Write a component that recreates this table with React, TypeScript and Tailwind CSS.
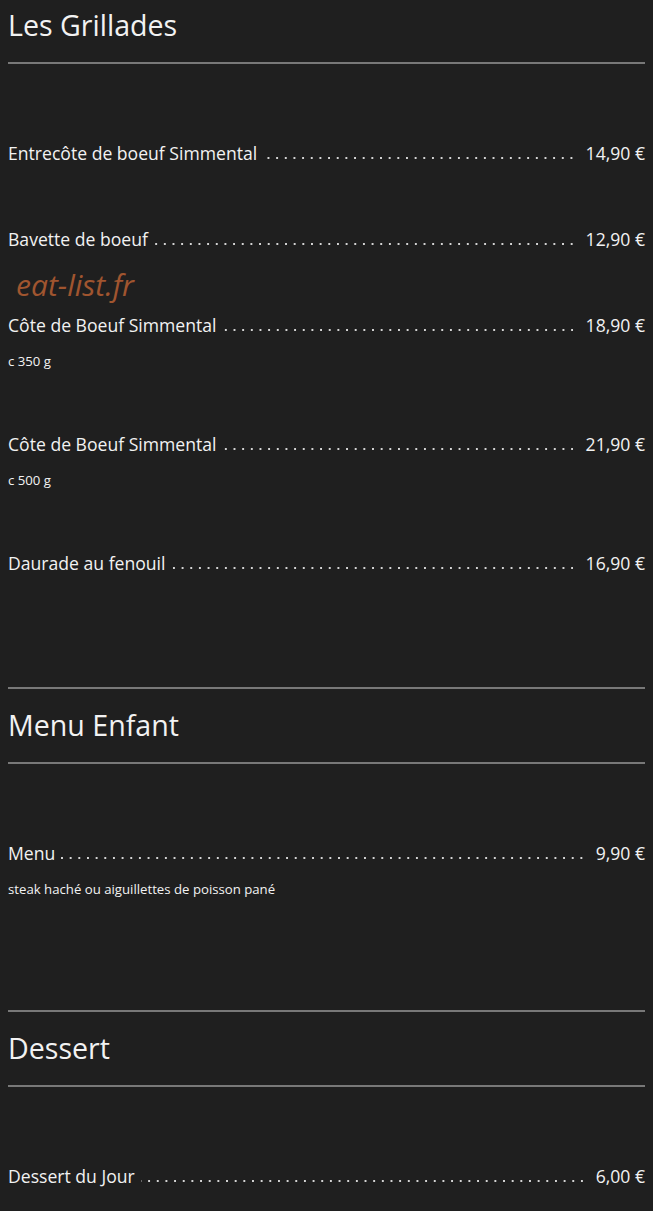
import React from "react";

type Item = { name: string; price: string; desc?: string };
type Section = { title: string; items: Item[] };

const sections: Section[] = [
  {
    title: "Les Grillades",
    items: [
      { name: "Entrecôte de boeuf Simmental", price: "14,90 €" },
      { name: "Bavette de boeuf", price: "12,90 €" },
      { name: "Côte de Boeuf Simmental", price: "18,90 €", desc: "c 350 g" },
      { name: "Côte de Boeuf Simmental", price: "21,90 €", desc: "c 500 g" },
      { name: "Daurade au fenouil", price: "16,90 €" },
    ],
  },
  {
    title: "Menu Enfant",
    items: [
      {
        name: "Menu",
        price: "9,90 €",
        desc: "steak haché ou aiguillettes de poisson pané",
      },
    ],
  },
  {
    title: "Dessert",
    items: [{ name: "Dessert du Jour", price: "6,00 €" }],
  },
];

function Row({ item }: { item: Item }) {
  return (
    <div className="pb-[62px]">
      <div className="flex items-end text-[17.6px] leading-[24px] text-[#f2f2f2]">
        <span className="whitespace-nowrap">{item.name}</span>
        <span className="ml-[6px] mr-[13px] mb-[6px] h-[2px] flex-1 bg-[linear-gradient(to_left,#d4d4d4_2px,transparent_2px)] bg-[length:8.67px_2px] bg-right bg-repeat-x" />
        <span className="whitespace-nowrap">{item.price}</span>
      </div>
      {item.desc && (
        <div className="mt-[15px] text-[13.2px] leading-[18px] text-[#f2f2f2]">
          {item.desc}
        </div>
      )}
    </div>
  );
}

export default function App() {
  return (
    <div className="relative min-h-screen bg-[#1f1f1f] px-2 font-['Open_Sans',sans-serif] text-[#f2f2f2]">
      {sections.map((s, i) => (
        <section key={s.title}>
          {i > 0 && <div className="h-[2px] bg-[#787878]" />}
          <h2
            className={
              i === 0
                ? "pt-[7px] pb-[19px] text-[28.6px] leading-[36px] font-normal"
                : "pt-[18px] pb-[19px] text-[28.6px] leading-[36px] font-normal"
            }
          >
            {s.title}
          </h2>
          <div className="h-[2px] bg-[#787878]" />
          <div className="pt-[77px] pb-[50px]">
            {s.items.map((it, j) => (
              <Row key={j} item={it} />
            ))}
          </div>
        </section>
      ))}
      <div className="absolute left-[16px] top-[267px] text-[30px] italic leading-[36px] text-[#a0552f]">
        eat-list.fr
      </div>
    </div>
  );
}
